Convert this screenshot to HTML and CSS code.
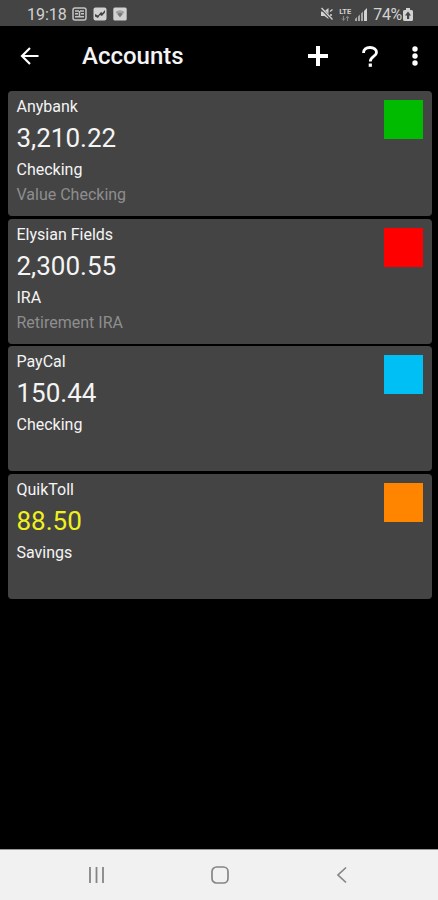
FILE: index.html
```html
<!DOCTYPE html>
<html lang="en">
<head>
    <meta charset="UTF-8">
    <title>Accounts</title>
    <link rel="stylesheet" href="styles.css">
</head>
<body>
    <!-- Phone status bar -->
    <div class="status">
        <span class="time">19:18</span>
        <svg class="news" width="15" height="14" viewBox="0 0 15 14">
            <rect x="1" y="1" width="13" height="12" rx="2" fill="none" stroke="#c4c4c4" stroke-width="1.5"/>
            <path d="M3 4h4M8 4h4M3 6.8h3M9 6.8h3M3 9.8h9M7.5 4v5" stroke="#c4c4c4" stroke-width="1.5"/>
        </svg>
        <svg class="photo" width="14" height="14" viewBox="0 0 14 14">
            <rect x="0.5" y="0.5" width="13" height="13" rx="2" fill="#d2d2d2"/>
            <path d="M2 9.5V7l3 1.5L8 5l1.5 1L12 3v2.5L9 9 7 8l-2 3z" fill="#444"/>
        </svg>
        <svg class="wifi" width="14" height="14" viewBox="0 0 14 14">
            <rect x="0.3" y="0.5" width="13.4" height="13" rx="1.5" fill="#d2d2d2"/>
            <path d="M2.5 5Q7 1.5 11.5 5L7 10.5z" fill="#a0a0a0"/>
            <path d="M4.5 7Q7 5.2 9.5 7L7 10z" fill="#777"/>
        </svg>
        <div class="status-right">
            <svg width="14" height="14" viewBox="0 0 14 14">
                <path d="M1 4.5h3L8.500 1v11L4.500 9H1z" fill="#d2d2d2"/>
                <path d="M1 1l11.500 12" stroke="#444" stroke-width="2.600"/>
                <path d="M1.500 1l11 11.500M10 4.500l2.500-2M10 8h2" stroke="#d2d2d2" stroke-width="1.300"/>
            </svg>
            <div class="lte">
                <span>LTE</span>
                <svg width="9" height="5" viewBox="0 0 9 5">
                    <path d="M2.500 0v4M1 2.500l1.500 2 1.500-2M6.500 5V1M5 2.200l1.500-2 1.500 2" fill="none" stroke="#888" stroke-width="1"/>
                </svg>
            </div>
            <svg class="signal" width="13" height="13" viewBox="0 0 13 13">
                <path d="M0 13v-2l2-2v4zM3 13V8.500l2-2V13zM6 13V5.500l2-2V13z" fill="#a8a8a8"/>
                <path d="M9 13V3l3-3v13z" fill="#d2d2d2"/>
            </svg>
            <span class="percent">74%</span>
            <svg class="battery" width="10" height="13" viewBox="0 0 10 13">
                <path d="M3 0h4v2h1.500q1.500 0 1.500 1.500v8q0 1.500-1.500 1.500h-7Q0 13 0 11.500v-8Q0 2 1.500 2H3z" fill="#d2d2d2"/>
                <path d="M5 3.500L2 7.500h2V11h2.200V7.500H8z" fill="#444"/>
            </svg>
        </div>
    </div>

    <!-- Toolbar -->
    <div class="toolbar">
        <svg class="back" width="20" height="20" viewBox="0 0 20 20">
            <path d="M18.500 10H2.500M10 2L2 10l8 8" fill="none" stroke="#fff" stroke-width="2.200"/>
        </svg>
        <h1>Accounts</h1>
        <svg class="add" width="20" height="20" viewBox="0 0 20 20">
            <path d="M10 0v20M0 10h20" stroke="#fff" stroke-width="4"/>
        </svg>
        <svg class="help" width="16" height="21" viewBox="0 0 16 21">
            <path d="M1.500 7C1.500 3.500 4 1.500 8 1.500S14.500 3.500 14.500 6.500C14.500 10.500 8.300 10.500 8.300 15.500" fill="none" stroke="#fff" stroke-width="2.800"/>
            <rect x="6.700" y="17.500" width="3.200" height="3.300" fill="#fff"/>
        </svg>
        <svg class="more" width="6" height="20" viewBox="0 0 6 20">
            <circle cx="3" cy="3" r="2.700" fill="#fff"/>
            <circle cx="3" cy="10" r="2.700" fill="#fff"/>
            <circle cx="3" cy="17" r="2.700" fill="#fff"/>
        </svg>
    </div>

    <!-- Account list -->
    <div class="accounts">
        <div class="card">
            <div>
                <div class="name">Anybank</div>
                <div class="amount">3,210.22</div>
                <div class="type">Checking</div>
                <div class="note">Value Checking</div>
            </div>
            <div class="swatch green"></div>
        </div>
        <div class="card">
            <div>
                <div class="name">Elysian Fields</div>
                <div class="amount">2,300.55</div>
                <div class="type">IRA</div>
                <div class="note">Retirement IRA</div>
            </div>
            <div class="swatch red"></div>
        </div>
        <div class="card">
            <div>
                <div class="name">PayCal</div>
                <div class="amount">150.44</div>
                <div class="type">Checking</div>
            </div>
            <div class="swatch blue"></div>
        </div>
        <div class="card">
            <div>
                <div class="name">QuikToll</div>
                <div class="amount low">88.50</div>
                <div class="type">Savings</div>
            </div>
            <div class="swatch orange"></div>
        </div>
    </div>

    <!-- System navigation -->
    <div class="navbar">
        <svg width="18" height="18" viewBox="0 0 18 18">
            <path d="M2 1v16M8.500 1v16M15 1v16" stroke="#858585" stroke-width="1.800"/>
        </svg>
        <svg width="18" height="18" viewBox="0 0 18 18">
            <rect x="1" y="1" width="16" height="16" rx="4.500" fill="none" stroke="#858585" stroke-width="1.700"/>
        </svg>
        <svg width="18" height="18" viewBox="0 0 18 18">
            <path d="M13 1.500L5 9l8 7.500" fill="none" stroke="#858585" stroke-width="1.700"/>
        </svg>
    </div>
</body>
</html>
```
FILE: styles.css
```css
* {
    box-sizing: border-box;
}
body {
    margin: 0;
    height: 900px;
    display: flex;
    flex-direction: column;
    overflow: hidden;
    background-color: #000;
    color: #f4f4f4;
    font-family: Roboto, "Liberation Sans", sans-serif;
}
svg {
    display: block;
    flex: none;
}
.status {
    height: 26px;
    flex: none;
    display: flex;
    align-items: center;
    padding: 2px 25px 0 27px;
    background-color: #444;
    color: #d2d2d2;
    font-size: 16px;
}
.time {
    width: 45px;
}
.photo {
    margin-left: 6px;
}
.wifi {
    margin-left: 6px;
}
.status-right {
    display: flex;
    align-items: center;
    margin-left: auto;
}
.lte {
    display: flex;
    flex-direction: column;
    align-items: center;
    width: 14px;
    margin-left: 4px;
    font-size: 7.5px;
    font-weight: bold;
    line-height: 8px;
}
.signal {
    margin-left: 3px;
}
.percent {
    margin-left: 5px;
    letter-spacing: -0.3px;
}
.battery {
    margin-left: 1px;
}
.toolbar {
    height: 60px;
    flex: none;
    display: flex;
    align-items: center;
    padding: 0 20px;
}
h1 {
    margin: 0 0 0 42px;
    width: 227px;
    font-size: 24px;
    font-weight: 500;
}
.help {
    margin-left: 34px;
}
.more {
    margin-left: 34px;
}
.accounts {
    flex: 1;
    display: flex;
    flex-direction: column;
    gap: 2.7px;
    padding: 5px 6px 0 8px;
}
.card {
    height: 125px;
    display: flex;
    justify-content: space-between;
    padding: 3px 9px 0 8.5px;
    border-radius: 4px;
    background-color: #444;
    font-size: 16px;
}
.name {
    line-height: 26px;
}
.amount {
    font-size: 26px;
    line-height: 37px;
}
.low {
    color: #f0f01e;
}
.type {
    line-height: 25px;
}
.note {
    line-height: 26px;
    color: #8e8e8e;
}
.swatch {
    width: 39px;
    height: 39px;
    margin-top: 6px;
}
.green {
    background-color: #00bb00;
}
.red {
    background-color: #ff0000;
}
.blue {
    background-color: #00bff5;
}
.orange {
    background-color: #ff8400;
}
.navbar {
    height: 51px;
    flex: none;
    display: flex;
    justify-content: space-between;
    align-items: center;
    padding: 0 87px 0 88px;
    border-top: 1px solid #999;
    background-color: #f1f1f1;
}
```
